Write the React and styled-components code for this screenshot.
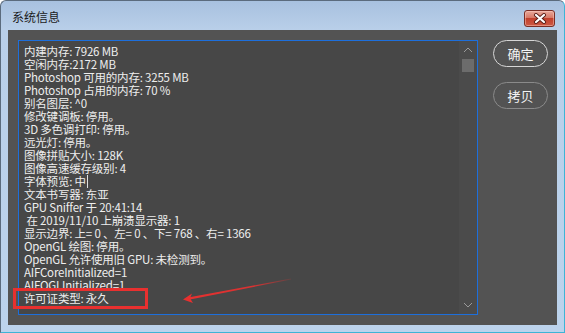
import React from 'react';
import styled, { createGlobalStyle } from 'styled-components';

const GlobalStyle = createGlobalStyle`
  html, body {
    margin: 0;
    padding: 0;
    overflow: hidden;
    background: #ffffff;
  }
`;

const Window = styled.div`
  position: relative;
  width: 565px;
  height: 333px;
  box-sizing: border-box;
  display: flex;
  flex-direction: column;
  border: 1px solid #5b6b7d;
  border-right-color: #3db4d6;
  border-bottom-color: #3db4d6;
  border-radius: 6px 6px 0 0;
  background: linear-gradient(
    to bottom,
    #a8c1df 0px,
    #b9cfe9 29px,
    #bcd3ec 100%
  );
  font-family: "Noto Sans CJK SC", "Noto Sans", sans-serif;
`;

const TitleBar = styled.div`
  height: 29px;
  flex: none;
  display: flex;
  align-items: flex-start;
  justify-content: space-between;
  padding: 0 9px 0 11px;
`;

const Title = styled.div`
  margin-top: 9px;
  font-size: 12px;
  line-height: 14px;
  color: #1b1b1b;
`;

const CloseButton = styled.div`
  margin-top: 9px;
  width: 29px;
  height: 15px;
  border: 1px solid #7a2e25;
  border-radius: 3px;
  display: flex;
  align-items: center;
  justify-content: center;
  background: linear-gradient(
    to bottom,
    #e9a99b 0%,
    #d77866 45%,
    #c2402c 50%,
    #cd5a45 100%
  );
  box-shadow: inset 0 0 0 1px rgba(255, 210, 200, 0.45);
`;

const Body = styled.div`
  flex: 1;
  margin: 0 7px 7px 7px;
  padding: 10px 9px 10px 10px;
  background: #535353;
  display: flex;
  align-items: flex-start;
`;

const InfoBox = styled.div`
  width: 460px;
  height: 275px;
  box-sizing: border-box;
  border: 1px solid #1d6fdc;
  background: #474747;
  display: flex;
`;

const InfoText = styled.div`
  flex: 1;
  padding: 4px 0 0 5px;
  overflow: hidden;
`;

const Line = styled.div`
  font-size: 11.5px;
  letter-spacing: -0.2px;
  line-height: 13px;
  height: 13px;
  color: #eeeeee;
  white-space: pre;
`;

const Caret = styled.span`
  display: inline-block;
  width: 1px;
  height: 13px;
  margin-left: 1px;
  vertical-align: top;
  background: #e0e0e0;
`;

const ScrollBar = styled.div`
  width: 18px;
  background: #4b4b4b;
  display: flex;
  flex-direction: column;
  align-items: center;
  padding: 6px 0;
  box-sizing: border-box;
`;

const Thumb = styled.div`
  width: 12px;
  height: 13px;
  margin-top: 6px;
  background: #6c6c6c;
`;

const Spacer = styled.div`
  flex: 1;
`;

const ButtonColumn = styled.div`
  margin-left: 15px;
  display: flex;
  flex-direction: column;
  gap: 15px;
`;

const PillButton = styled.div`
  width: 55px;
  height: 27px;
  box-sizing: border-box;
  border-radius: 14px;
  border: 1px solid ${(p) => (p.$primary ? '#d6d6d6' : '#8a8a8a')};
  display: flex;
  align-items: center;
  justify-content: center;
  font-size: 13px;
  color: #f4f4f4;
`;

const Highlight = styled.div`
  position: absolute;
  left: 12px;
  top: 287px;
  width: 135px;
  height: 21px;
  box-sizing: border-box;
  border: 3px solid #e8302f;
  pointer-events: none;
`;

const Overlay = styled.svg`
  position: absolute;
  left: 0;
  top: 0;
  pointer-events: none;
`;

const lines = [
  '内建内存: 7926 MB',
  '空闲内存:2172 MB',
  'Photoshop 可用的内存: 3255 MB',
  'Photoshop 占用的内存: 70 %',
  '别名图层: ^0',
  '修改键调板: 停用。',
  '3D 多色调打印: 停用。',
  '远光灯: 停用。',
  '图像拼贴大小: 128K',
  '图像高速缓存级别: 4',
  'CARET',
  '文本书写器: 东亚',
  'GPU Sniffer 于 20:41:14',
  ' 在 2019/11/10 上崩溃显示器: 1',
  '显示边界: 上= 0 、左= 0 、下= 768 、右= 1366',
  'OpenGL 绘图: 停用。',
  'OpenGL 允许使用旧 GPU: 未检测到。',
  'AIFCoreInitialized=1',
  'AIFOGLInitialized=1',
  '许可证类型: 永久',
];

const App = () => {
  return (
    <>
      <GlobalStyle />
      <Window>
        <TitleBar>
          <Title>系统信息</Title>
          <CloseButton>
            <svg width="14" height="11" viewBox="0 0 14 11">
              <path d="M3 2 L11 9 M11 2 L3 9" stroke="#5a1d16" strokeWidth="4" strokeLinecap="round" />
              <path d="M3 2 L11 9 M11 2 L3 9" stroke="#ffffff" strokeWidth="2.2" strokeLinecap="round" />
            </svg>
          </CloseButton>
        </TitleBar>
        <Body>
          <InfoBox>
            <InfoText>
              {lines.map((l, i) =>
                l === 'CARET' ? (
                  <Line key={i}>
                    字体预览: 中<Caret />
                  </Line>
                ) : (
                  <Line key={i}>{l}</Line>
                )
              )}
            </InfoText>
            <ScrollBar>
              <svg width="10" height="6" viewBox="0 0 10 6">
                <path d="M1 5 L5 1 L9 5" fill="none" stroke="#9a9a9a" strokeWidth="1" />
              </svg>
              <Thumb />
              <Spacer />
              <svg width="10" height="6" viewBox="0 0 10 6">
                <path d="M1 1 L5 5 L9 1" fill="none" stroke="#9a9a9a" strokeWidth="1" />
              </svg>
            </ScrollBar>
          </InfoBox>
          <ButtonColumn>
            <PillButton $primary>确定</PillButton>
            <PillButton>拷贝</PillButton>
          </ButtonColumn>
        </Body>
        <Highlight />
        <Overlay width="565" height="333" viewBox="0 0 565 333">
          <defs>
            <linearGradient id="fade" x1="290" y1="278" x2="185" y2="298" gradientUnits="userSpaceOnUse">
              <stop offset="0" stopColor="#e8302f" stopOpacity="0.15" />
              <stop offset="0.35" stopColor="#e8302f" stopOpacity="0.9" />
              <stop offset="1" stopColor="#e8302f" stopOpacity="1" />
            </linearGradient>
          </defs>
          <polygon points="290,277.6 290,278.4 189,298.6 188.5,296.2" fill="url(#fade)" />
          <polygon points="182,298.5 191,292.6 189,297.3 192,302" fill="#e8302f" />
        </Overlay>
      </Window>
    </>
  );
};

export default App;
